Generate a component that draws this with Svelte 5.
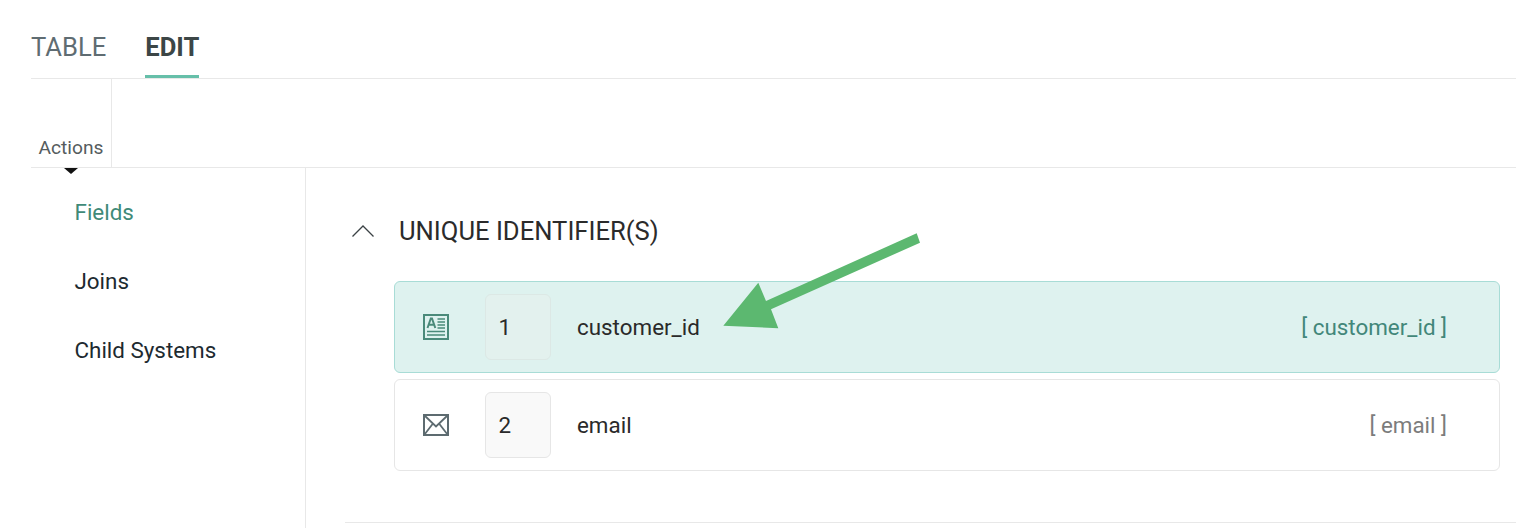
<script>
  const nav = [
    { label: 'Fields', active: true },
    { label: 'Joins', active: false },
    { label: 'Child Systems', active: false }
  ];
</script>

<div class="page">
  <div class="tabs">
    <div class="tab">TABLE</div>
    <div class="tab active">EDIT</div>
  </div>
  <div class="actions-row">
    <div class="actions">
      <span>Actions</span>
      <i class="caret"></i>
    </div>
  </div>
  <div class="body">
    <nav class="side">
      {#each nav as item}
        <div class="nav-item" class:active={item.active}>{item.label}</div>
      {/each}
    </nav>
    <main class="main">
      <div class="section-head">
        <svg class="chev" width="22" height="12" viewBox="0 0 22 12" fill="none"><path d="M0.5 11.5 L11 1 L21.5 11.5" stroke="#3b4245" stroke-width="1.3"/></svg>
        <h2>UNIQUE IDENTIFIER(S)</h2>
      </div>
      <div class="rows">
        <div class="row selected">
          <svg class="ico" width="26" height="26" viewBox="0 0 26 26" fill="none">
            <rect x="1" y="1" width="24" height="24" stroke="currentColor" stroke-width="2"/>
            <path d="M4.500 14 L7.800 4.500 H9 L12.300 14 M5.800 10.800 H11" stroke="currentColor" stroke-width="2"/>
            <path d="M14.500 5h7.500M14.500 8h7.500M14.500 11h7.500M14.500 14h7.500M4 17.500h18M4 21h18" stroke="currentColor" stroke-width="1.4"/>
          </svg>
          <div class="num">1</div>
          <div class="name">customer_id</div>
          <div class="ref">[ customer_id ]</div>
        </div>
        <div class="row">
          <svg class="ico" width="26" height="22" viewBox="0 0 26 22" fill="none">
            <rect x="1" y="1" width="24" height="20" stroke="currentColor" stroke-width="2"/>
            <path d="M1.500 1.500 L13 12.500 L24.500 1.500 M1.500 20.500 L10 9.500 M24.500 20.500 L16 9.500" stroke="currentColor" stroke-width="1.800"/>
          </svg>
          <div class="num">2</div>
          <div class="name">email</div>
          <div class="ref">[ email ]</div>
        </div>
      </div>
      <div class="rule"></div>
    </main>
  </div>
  <svg class="arrow" width="200" height="100" viewBox="0 0 200 100">
    <path d="M194.700 1.300 L198 10.700 L49 77.300 L56.300 96.300 L1.300 93.700 L36.300 50.700 L44 69 Z" fill="#5cb870"/>
  </svg>
</div>

<style>
  :global(body) {
    margin: 0;
    background: #fff;
    font-family: Roboto, "Liberation Sans", sans-serif;
  }
  .page {
    position: relative;
    width: 1516px;
    height: 528px;
    overflow: hidden;
    padding-left: 31px;
    box-sizing: border-box;
  }
  .tabs {
    display: flex;
    gap: 39px;
    height: 78px;
    border-bottom: 1px solid #e8e8e8;
  }
  .tab {
    font-size: 25.6px;
    line-height: 30px;
    padding-top: 32px;
    color: #5f6c72;
    box-sizing: border-box;
    height: 78px;
  }
  .tab.active {
    font-weight: 700;
    color: #3c4646;
    border-bottom: 3px solid #66bfa9;
  }
  .actions-row {
    height: 88px;
    border-bottom: 1px solid #e8e8e8;
  }
  .actions {
    position: relative;
    width: 81px;
    height: 88px;
    box-sizing: border-box;
    border-right: 1px solid #e8e8e8;
    text-align: center;
    font-size: 19.2px;
    color: #555c5e;
    padding-top: 57px;
    line-height: 24px;
  }
  .caret {
    position: absolute;
    left: 33px;
    top: 89px;
    width: 0;
    height: 0;
    border-left: 7px solid transparent;
    border-right: 7px solid transparent;
    border-top: 6px solid #111;
  }
  .body {
    display: flex;
    height: 360px;
  }
  .side {
    width: 275px;
    box-sizing: border-box;
    border-right: 1px solid #e8e8e8;
    padding-left: 43.500px;
    padding-top: 27px;
  }
  .nav-item {
    font-size: 22.4px;
    line-height: 34px;
    height: 69px;
    color: #1d2a30;
  }
  .nav-item.active { color: #3f8a78; }
  .main {
    flex: 1;
    padding-left: 39px;
  }
  .section-head {
    display: flex;
    align-items: center;
    height: 40px;
    margin-top: 43px;
  }
  .chev { margin-left: 7px; margin-right: 25px; }
  h2 {
    margin: 0;
    font-size: 25.6px;
    font-weight: 400;
    color: #2b2b2b;
    line-height: 40px;
  }
  .rows {
    margin: 30px 16px 0 49px;
    display: flex;
    flex-direction: column;
    gap: 6px;
  }
  .row {
    display: flex;
    align-items: center;
    height: 92px;
    box-sizing: border-box;
    border: 1px solid #e6e6e6;
    border-radius: 6px;
    padding-left: 27.500px;
    padding-right: 52px;
    color: #5d6b70;
    position: relative;
  }
  .row.selected {
    background: #def2ef;
    border-color: #a8dcd6;
    color: #4a8a7a;
  }
  .ico { flex: none; }
  .num {
    position: absolute;
    left: 90px;
    top: 12px;
    width: 66px;
    height: 66px;
    box-sizing: border-box;
    border: 1px solid #e6e6e6;
    border-radius: 6px;
    background: #f9f9f9;
    padding-left: 12.500px;
    line-height: 64px;
    font-size: 22.4px;
    color: #2a2a2a;
  }
  .selected .num { background: #e3f1ee; border-color: #dce8e5; }
  .name {
    position: absolute;
    left: 182px;
    font-size: 22.4px;
    color: #2a2a2a;
  }
  .ref {
    margin-left: auto;
    font-size: 22.4px;
    color: #7c7c7c;
  }
  .selected .ref { color: #42877a; }
  .rule {
    height: 1px;
    background: #e8e8e8;
    margin-top: 51px;
  }
  .arrow {
    position: absolute;
    left: 722px;
    top: 232px;
  }
</style>
